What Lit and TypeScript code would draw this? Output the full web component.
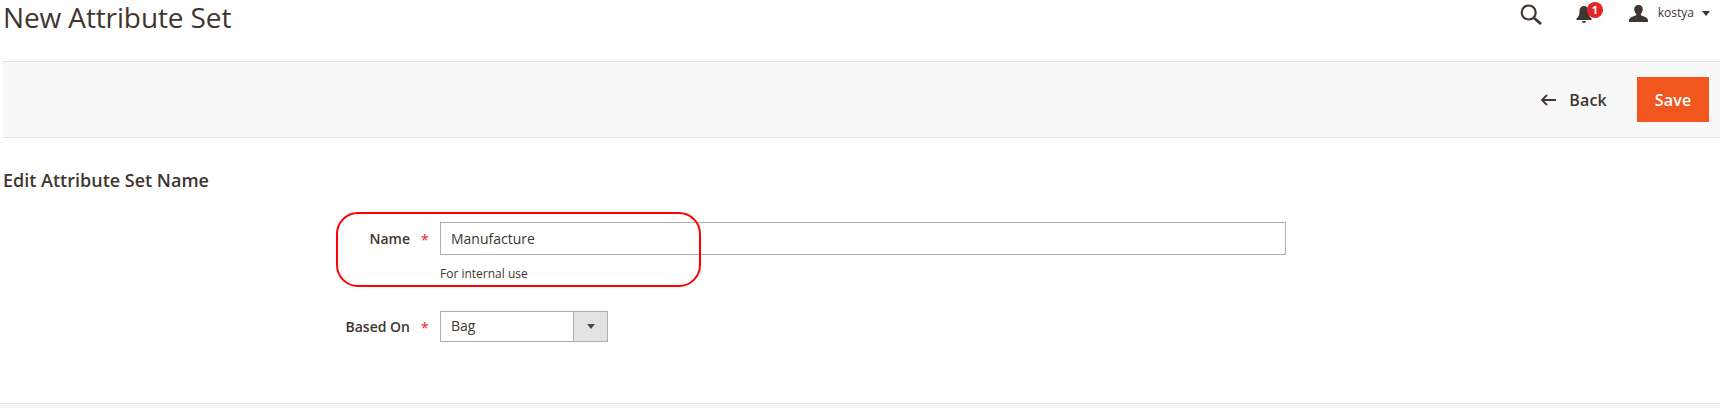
import { LitElement, html, css } from "lit";
import { customElement } from "lit/decorators.js";

@customElement("app-root")
export class AppRoot extends LitElement {
  static styles = css`
    :host { display: block; width: 1720px; height: 408px; position: relative; overflow: hidden; background: #fff; font-family: "Open Sans", sans-serif; color: #41362f; font-size: 14px; }
    .head { height: 61px; box-sizing: border-box; display: flex; align-items: flex-start; justify-content: space-between; padding-left: 3px; }
    h1 { margin: 0; font-size: 28px; font-weight: 400; line-height: 34px; letter-spacing: -0.12px; }
    .actions { display: flex; align-items: center; height: 26px; padding-right: 10px; }
    .search { width: 24px; height: 24px; margin-right: 33px; }
    .bell { position: relative; width: 16px; height: 18px; margin: 3px 37px 0 0; }
    .bell svg { display: block; }
    .badge { position: absolute; left: 11px; top: -4px; width: 16px; height: 16px; border-radius: 50%; background: #e22626; color: #fff; font-size: 11px; font-weight: 700; line-height: 16px; text-align: center; }
    .user { display: flex; align-items: center; }
    .user svg { display: block; margin-right: 10px; }
    .uname { font-size: 12px; line-height: 26px; margin-right: 8px; }
    .caret { width: 0; height: 0; border-left: 4px solid transparent; border-right: 4px solid transparent; border-top: 5px solid #41362f; }
    .bar { margin-left: 3px; height: 77px; box-sizing: border-box; background: #f8f8f8; border-top: 1px solid #e3e3e3; border-bottom: 1px solid #e3e3e3; display: flex; justify-content: flex-end; align-items: center; padding-right: 11px; }
    .back { display: flex; align-items: center; font-size: 16px; font-weight: 600; margin-right: 30px; letter-spacing: 0.2px; }
    .back svg { margin-right: 13px; display: block; }
    .save { width: 72px; height: 45px; background: #f1561f; color: #fff; font-size: 16px; font-weight: 600; display: flex; align-items: center; justify-content: center; letter-spacing: 0.2px; }
    h2 { margin: 0; padding: 30px 0 0 3px; font-size: 18px; font-weight: 600; line-height: 24px; height: 24px; }
    .form { padding-top: 30px; }
    .row { display: flex; }
    .label { width: 410px; text-align: right; font-weight: 600; font-size: 14px; flex: none; }
    .star { width: 30px; flex: none; color: #e22626; text-align: right; padding-right: 11px; box-sizing: border-box; font-size: 15px; font-weight: 400; }
    .r1 .label { line-height: 33px; }
    .r1 .star { line-height: 35px; }
    .input { width: 846px; height: 33px; box-sizing: border-box; border: 1px solid #adadad; padding-left: 10px; line-height: 31px; font-size: 14px; }
    .note { font-size: 12px; line-height: 16px; margin-top: 11px; }
    .r2 { margin-top: 29px; }
    .r2 .label { line-height: 31px; }
    .r2 .star { line-height: 33px; }
    .select { width: 168px; height: 31px; box-sizing: border-box; border: 1px solid #adadad; display: flex; }
    .val { flex: 1; padding-left: 10px; line-height: 28px; font-size: 14px; }
    .arrow { width: 33px; background: #e3e3e3; border-left: 1px solid #adadad; display: flex; align-items: center; justify-content: center; }
    .arrow i { width: 0; height: 0; border-left: 4px solid transparent; border-right: 4px solid transparent; border-top: 5px solid #514943; }
    .foot { position: absolute; left: 0; right: 0; top: 403px; bottom: 0; background: #f5f5f5; border-top: 1px solid #e3e3e3; }
    .mark { position: absolute; left: 336px; top: 212px; width: 365px; height: 75px; box-sizing: border-box; border: 2px solid #f00; border-radius: 22px; }
  `;

  render() {
    return html`
      <div class="head">
        <h1>New Attribute Set</h1>
        <div class="actions">
          <svg class="search" viewBox="0 0 24 24" fill="none" stroke="#41362f">
            <circle cx="9.700" cy="11.500" r="7" stroke-width="2.200"></circle>
            <path d="M15 17l7 6" stroke-width="2.800"></path>
          </svg>
          <div class="bell">
            <svg width="16" height="18" viewBox="0 0 16 18" fill="#41362f">
              <path d="M8 0c3 0 4.500 2.400 4.500 5.500 0 3.500 1 5.500 3 7v1.500H.5v-1.500c2-1.500 3-3.500 3-7C3.500 2.400 5 0 8 0z"></path>
              <path d="M6 15h4a2 2 0 0 1-4 0z"></path>
            </svg>
            <span class="badge">1</span>
          </div>
          <div class="user">
            <svg width="19" height="17" viewBox="0 0 20 20" preserveAspectRatio="none" fill="#41362f">
              <path d="M10 0c3 0 4.500 2.200 4.500 5 0 2.200-.8 4-2 5.200v2c1 .8 7 1.800 7.500 5.800v2H0v-2c.5-4 6.500-5 7.500-5.800v-2C6.300 9 5.500 7.200 5.500 5 5.500 2.200 7 0 10 0z"></path>
            </svg>
            <span class="uname">kostya</span>
            <span class="caret"></span>
          </div>
        </div>
      </div>
      <div class="bar">
        <div class="back">
          <svg width="16" height="12" viewBox="0 0 16 12" fill="none" stroke="#41362f" stroke-width="1.800">
            <path d="M16 6H2M7 1L2 6l5 5"></path>
          </svg>
          Back
        </div>
        <div class="save">Save</div>
      </div>
      <h2>Edit Attribute Set Name</h2>
      <div class="form">
        <div class="row r1">
          <div class="label">Name</div>
          <div class="star">*</div>
          <div>
            <div class="input">Manufacture</div>
            <div class="note">For internal use</div>
          </div>
        </div>
        <div class="row r2">
          <div class="label">Based On</div>
          <div class="star">*</div>
          <div class="select">
            <div class="val">Bag</div>
            <div class="arrow"><i></i></div>
          </div>
        </div>
      </div>
      <div class="foot"></div>
      <div class="mark"></div>
    `;
  }
}
